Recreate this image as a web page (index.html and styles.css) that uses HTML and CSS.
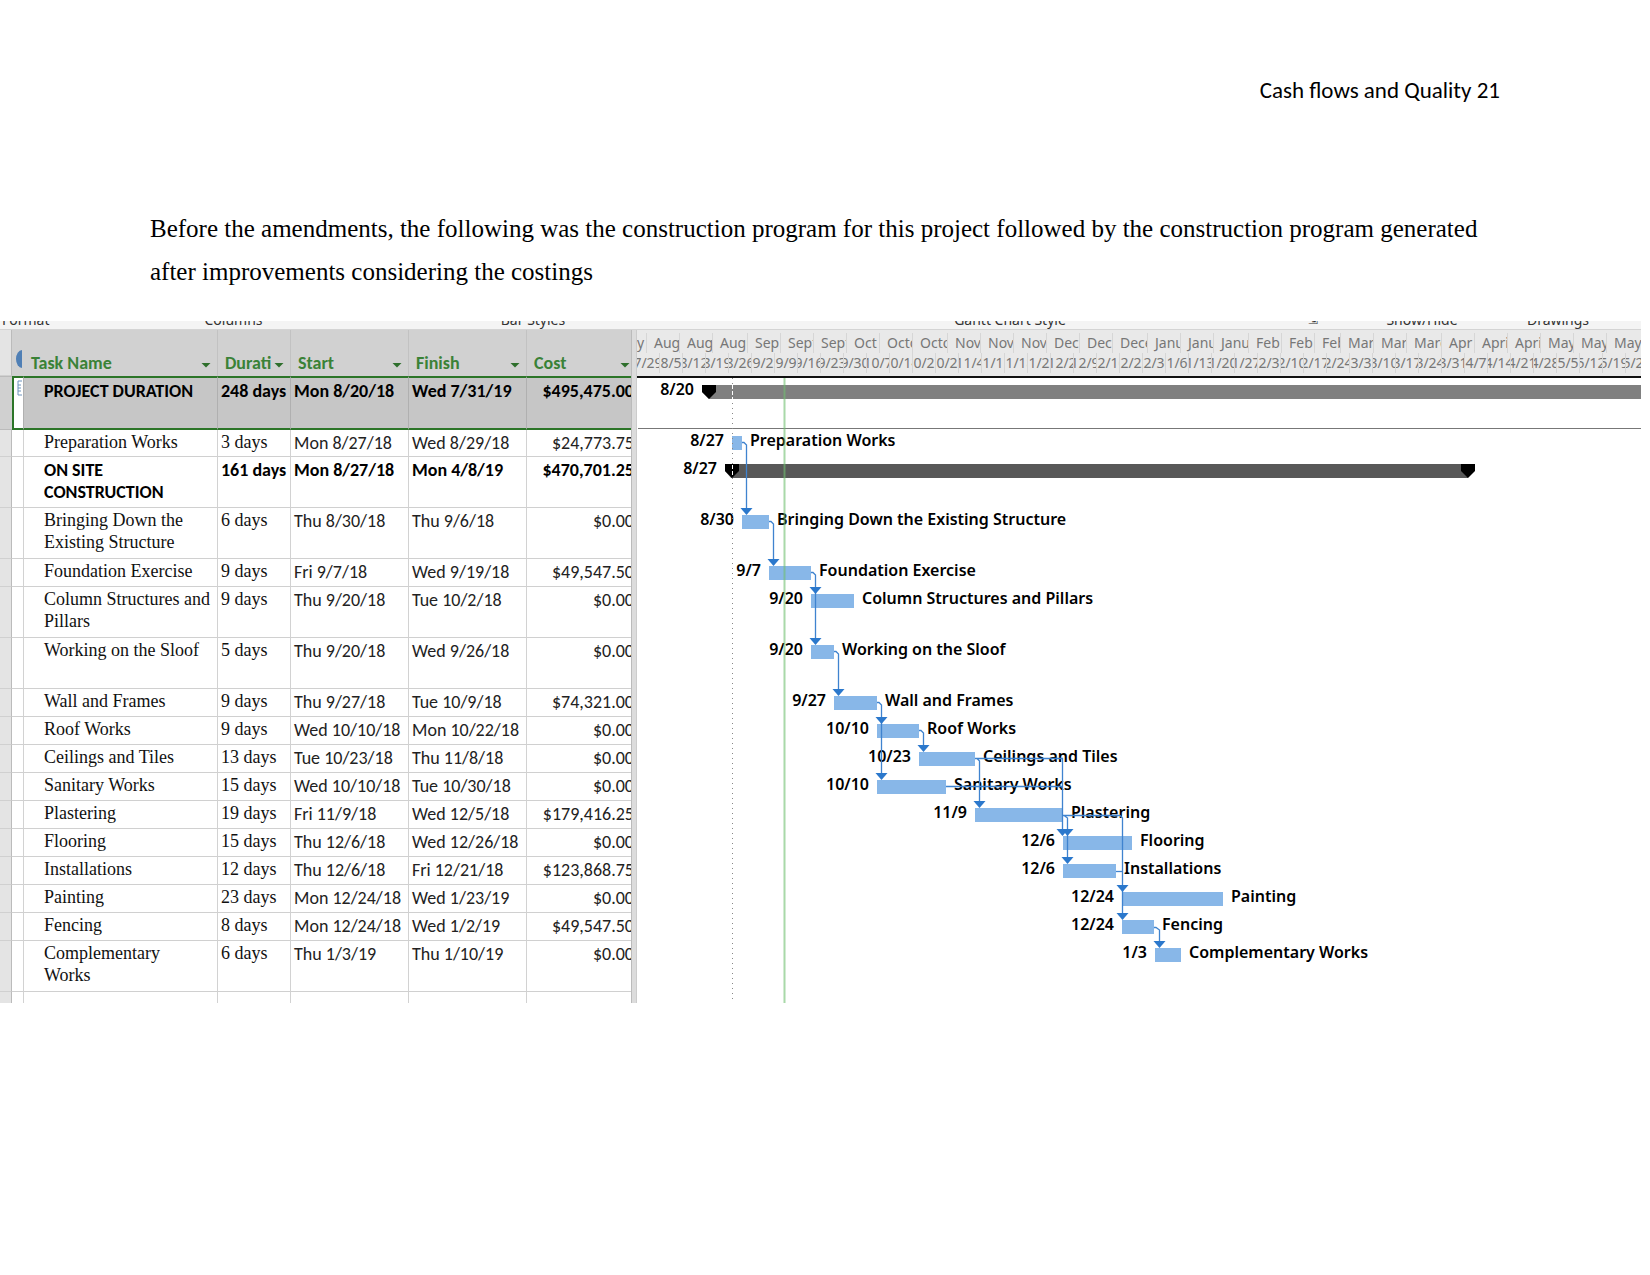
FILE: index.html
```html
<!DOCTYPE html>
<html lang="en">
<head>
<meta charset="utf-8">
<title>Cash flows and Quality</title>
<link rel="stylesheet" href="styles.css">
</head>
<body>
<header class="page-header">Cash flows and Quality 21</header>
<main>
<p class="intro">Before the amendments, the following was the construction program for this project followed by the construction program generated after improvements considering the costings</p>
<section class="program">
<div class="ribbon"><span class="first">Format</span><span>Columns</span><span>Bar Styles</span><span>Gantt Chart Style</span><span class="launcher">⇲</span><span>Show/Hide</span><span>Drawings</span></div>
<div class="panes">
<div class="sheet">
<table>
<colgroup><col class="c-head"><col class="c-info"><col class="c-task"><col class="c-dur"><col class="c-date"><col class="c-date"><col class="c-cost"></colgroup>
<thead>
<tr><td class="rowhead"></td><th class="info"><svg width="6" height="18" viewBox="0 0 6 18" aria-hidden="true"><path d="M6 0A6 9 0 0 0 6 18Z" fill="#4f7fb5"/></svg></th><th><div class="th"><span>Task Name</span><button aria-label="Filter task name"></button></div></th><th><div class="th"><span>Durati</span><button aria-label="Filter duration"></button></div></th><th><div class="th"><span>Start</span><button aria-label="Filter start"></button></div></th><th><div class="th"><span>Finish</span><button aria-label="Filter finish"></button></div></th><th><div class="th"><span>Cost</span><button aria-label="Filter cost"></button></div></th></tr>
</thead>
<tbody>
<tr class="selected bold"><td class="rowhead"></td><td class="info"><svg width="5" height="16" viewBox="0 0 5 16" aria-hidden="true"><path d="M5 1H1V15H5M1 5H4M1 8H4M1 11H4" fill="none" stroke="#6d93bd"/></svg></td><td>PROJECT DURATION</td><td>248 days</td><td>Mon 8/20/18</td><td>Wed 7/31/19</td><td>$495,475.00</td></tr>
<tr class="after"><td class="rowhead"></td><td></td><td>Preparation Works</td><td>3 days</td><td>Mon 8/27/18</td><td>Wed 8/29/18</td><td>$24,773.75</td></tr>
<tr class="tall bold"><td class="rowhead"></td><td></td><td>ON SITE CONSTRUCTION</td><td>161 days</td><td>Mon 8/27/18</td><td>Mon 4/8/19</td><td>$470,701.25</td></tr>
<tr class="tall"><td class="rowhead"></td><td></td><td>Bringing Down the Existing Structure</td><td>6 days</td><td>Thu 8/30/18</td><td>Thu 9/6/18</td><td>$0.00</td></tr>
<tr><td class="rowhead"></td><td></td><td>Foundation Exercise</td><td>9 days</td><td>Fri 9/7/18</td><td>Wed 9/19/18</td><td>$49,547.50</td></tr>
<tr class="tall"><td class="rowhead"></td><td></td><td>Column Structures and Pillars</td><td>9 days</td><td>Thu 9/20/18</td><td>Tue 10/2/18</td><td>$0.00</td></tr>
<tr class="tall"><td class="rowhead"></td><td></td><td>Working on the Sloof</td><td>5 days</td><td>Thu 9/20/18</td><td>Wed 9/26/18</td><td>$0.00</td></tr>
<tr><td class="rowhead"></td><td></td><td>Wall and Frames</td><td>9 days</td><td>Thu 9/27/18</td><td>Tue 10/9/18</td><td>$74,321.00</td></tr>
<tr><td class="rowhead"></td><td></td><td>Roof Works</td><td>9 days</td><td>Wed 10/10/18</td><td>Mon 10/22/18</td><td>$0.00</td></tr>
<tr><td class="rowhead"></td><td></td><td>Ceilings and Tiles</td><td>13 days</td><td>Tue 10/23/18</td><td>Thu 11/8/18</td><td>$0.00</td></tr>
<tr><td class="rowhead"></td><td></td><td>Sanitary Works</td><td>15 days</td><td>Wed 10/10/18</td><td>Tue 10/30/18</td><td>$0.00</td></tr>
<tr><td class="rowhead"></td><td></td><td>Plastering</td><td>19 days</td><td>Fri 11/9/18</td><td>Wed 12/5/18</td><td>$179,416.25</td></tr>
<tr><td class="rowhead"></td><td></td><td>Flooring</td><td>15 days</td><td>Thu 12/6/18</td><td>Wed 12/26/18</td><td>$0.00</td></tr>
<tr><td class="rowhead"></td><td></td><td>Installations</td><td>12 days</td><td>Thu 12/6/18</td><td>Fri 12/21/18</td><td>$123,868.75</td></tr>
<tr><td class="rowhead"></td><td></td><td>Painting</td><td>23 days</td><td>Mon 12/24/18</td><td>Wed 1/23/19</td><td>$0.00</td></tr>
<tr><td class="rowhead"></td><td></td><td>Fencing</td><td>8 days</td><td>Mon 12/24/18</td><td>Wed 1/2/19</td><td>$49,547.50</td></tr>
<tr class="tall"><td class="rowhead"></td><td></td><td>Complementary<br>Works</td><td>6 days</td><td>Thu 1/3/19</td><td>Thu 1/10/19</td><td>$0.00</td></tr>
<tr class="stub"><td class="rowhead"></td><td></td><td></td><td></td><td></td><td></td><td></td></tr>
</tbody>
</table>
</div>
<div class="splitter"></div>
<div class="chart">
<div class="scale">
<div class="tier months"><span class="part">y</span><span>Aug</span><span>Aug</span><span class="long">Augu</span><span>Sep</span><span>Sept</span><span>Sept</span><span>Oct</span><span>Octo</span><span class="long">Octo</span><span>Nov</span><span>Nov</span><span>Nov</span><span>Dec</span><span>Dec</span><span class="long">Dece</span><span>Janu</span><span>Janu</span><span class="long">Janu</span><span>Feb</span><span>Feb</span><span class="short">Feb</span><span>Mar</span><span>Mar</span><span class="long">Marc</span><span>Apr</span><span>Apri</span><span>Apri</span><span>May</span><span>May</span><span class="long">May</span></div>
<div class="tier weeks"><span>7/29</span><span>8/5</span><span>8/12</span><span>8/19</span><span>8/26</span><span>9/2</span><span>9/9</span><span>9/16</span><span>9/23</span><span>9/30</span><span>10/7</span><span>10/14</span><span>10/21</span><span>10/28</span><span>11/4</span><span>11/11</span><span>11/18</span><span>11/25</span><span>12/2</span><span>12/9</span><span>12/16</span><span>12/23</span><span>12/30</span><span>1/6</span><span>1/13</span><span>1/20</span><span>1/27</span><span>2/3</span><span>2/10</span><span>2/17</span><span>2/24</span><span>3/3</span><span>3/10</span><span>3/17</span><span>3/24</span><span>3/31</span><span>4/7</span><span>4/14</span><span>4/21</span><span>4/28</span><span>5/5</span><span>5/12</span><span>5/19</span><span>5/26</span></div>
</div>
<div class="bars">
<div class="row tall ruled"><span class="date" style="width:64px">8/20</span><i class="bar project"></i></div>
<div class="row"><span class="date" style="width:94px">8/27</span><i class="bar" style="width:10px"></i><span>Preparation Works</span></div>
<div class="row tall"><span class="date" style="width:87px">8/27</span><i class="bar summary" style="width:743px"></i></div>
<div class="row tall"><span class="date" style="width:104px">8/30</span><i class="bar" style="width:27px"></i><span>Bringing Down the Existing Structure</span></div>
<div class="row"><span class="date" style="width:131px">9/7</span><i class="bar" style="width:42px"></i><span>Foundation Exercise</span></div>
<div class="row tall"><span class="date" style="width:173px">9/20</span><i class="bar" style="width:43px"></i><span>Column Structures and Pillars</span></div>
<div class="row tall"><span class="date" style="width:173px">9/20</span><i class="bar" style="width:23px"></i><span>Working on the Sloof</span></div>
<div class="row"><span class="date" style="width:196px">9/27</span><i class="bar" style="width:43px"></i><span>Wall and Frames</span></div>
<div class="row"><span class="date" style="width:239px">10/10</span><i class="bar" style="width:42px"></i><span>Roof Works</span></div>
<div class="row"><span class="date" style="width:281px">10/23</span><i class="bar" style="width:56px"></i><span>Ceilings and Tiles</span></div>
<div class="row"><span class="date" style="width:239px">10/10</span><i class="bar" style="width:69px"></i><span>Sanitary Works</span></div>
<div class="row"><span class="date" style="width:337px">11/9</span><i class="bar" style="width:88px"></i><span>Plastering</span></div>
<div class="row"><span class="date" style="width:425px">12/6</span><i class="bar" style="width:69px"></i><span>Flooring</span></div>
<div class="row"><span class="date" style="width:425px">12/6</span><i class="bar" style="width:53px"></i><span>Installations</span></div>
<div class="row"><span class="date" style="width:484px">12/24</span><i class="bar" style="width:101px"></i><span>Painting</span></div>
<div class="row"><span class="date" style="width:484px">12/24</span><i class="bar" style="width:32px"></i><span>Fencing</span></div>
<div class="row tall"><span class="date" style="width:517px">1/3</span><i class="bar" style="width:26px"></i><span>Complementary Works</span></div>
<svg class="links" width="1003" height="625" viewBox="638 377 1003 625" aria-hidden="true">
<defs><path id="tip" d="M-6 -7H6L0 0Z" fill="#2b78cc"/><path id="cap" d="M-7 0H7V7L0 14L-7 7Z"/></defs>
<path d="M732.5 377V1002" stroke="#888" stroke-dasharray="1 4"/>
<path d="M732.5 384V398" stroke="#fff" stroke-dasharray="4 2"/>
<path d="M702 391V398H709Z" fill="#fff"/><path d="M725 470V478H732Z" fill="#fff"/><path d="M1475 470V478H1468Z" fill="#fff"/>
<use href="#cap" x="709" y="384"/><use href="#cap" x="732" y="463"/><use href="#cap" x="1468" y="463"/>
<path d="M732.5 464V476" stroke="#fff" stroke-dasharray="4 2"/>
<path d="M784.5 377V1002" stroke="#6fbf6f" stroke-opacity=".6" stroke-width="2"/>
<g fill="none" stroke="#3f83cf" stroke-width="1.3">
<path d="M742 441.5H744L746.5 444V508"/>
<path d="M769 520.5H771L773.5 523V559"/>
<path d="M811 571.5H813L815.5 574V638"/>
<path d="M834 650.5H836L838.5 653V689"/>
<path d="M877 701.5H879L881.5 704V773"/>
<path d="M919 729.5H921L923.5 732V745"/>
<path d="M975 757.5H1062.5V829M975 757.5H977L979.5 760V801"/>
<path d="M946 785.5H1062.5"/>
<path d="M1062 814.5H1120L1122.5 817V913M1064 814.5L1067.5 817V857"/>
<path d="M1116 870.5H1122"/>
<path d="M1154 926.5H1156L1159.5 929V941"/>
</g>
<use href="#tip" x="746.5" y="514"/><use href="#tip" x="773.5" y="565"/><use href="#tip" x="815.5" y="593"/><use href="#tip" x="815.5" y="644"/><use href="#tip" x="838.5" y="695"/><use href="#tip" x="881.5" y="723"/><use href="#tip" x="881.5" y="779"/><use href="#tip" x="923.5" y="751"/><use href="#tip" x="979.5" y="807"/><use href="#tip" x="1062.5" y="835"/><use href="#tip" x="1067.5" y="835"/><use href="#tip" x="1067.5" y="863"/><use href="#tip" x="1122.5" y="891"/><use href="#tip" x="1122.5" y="919"/><use href="#tip" x="1159.5" y="947"/>
</svg>
</div>
</div>
</div>
</section>
</main>
</body>
</html>
```
FILE: styles.css
```css
* { box-sizing: border-box; }
body { margin: 0; background: #fff; color: #000; font-family: Carlito, Calibri, Lato, sans-serif; }

.page-header { padding: 76px 150px 0; text-align: right; font-size: 23px; line-height: 28px; }
.intro { margin: 103px 150px 28px; font: 25px/43px "Liberation Serif", serif; }

.program { margin-right: 9px; overflow: hidden; }
.ribbon { display: grid; grid-template-columns: 117px 233px 366px 588px 18px 200px 72px; align-content: end; height: 9px; overflow: hidden; background: #f4f4f4; border-bottom: 1px solid #d4d4d4; font: 14px/18px "Noto Sans", sans-serif; color: #333; text-align: center; }
.ribbon .first { text-align: left; padding-left: 2px; }
.ribbon .launcher { font-size: 12px; }
.panes { display: grid; grid-template-columns: 631px 6px minmax(0, 1fr); }
.splitter { background: #dcdcdc; border-left: 1px solid #bbb; border-right: 1px solid #ccc; }

.sheet { overflow: hidden; }
table { width: 638px; table-layout: fixed; border-collapse: separate; border-spacing: 0; font-size: 18px; line-height: 22px; color: #222; }
.c-head { width: 12px; }
.c-info { width: 12px; }
.c-task { width: 194px; }
.c-dur { width: 73px; }
.c-date { width: 118px; }
.c-cost { width: 111px; }
th { height: 46px; padding: 0 4px 2px 7px; vertical-align: bottom; background: #d1d1d1; border-right: 1px solid #c2c2c2; color: #3a8237; text-align: left; }
th.info { padding: 0 0 8px 4px; border-right: 0; line-height: 0; }
.th { display: flex; justify-content: space-between; align-items: center; }
.th button { width: 10px; height: 5px; padding: 0; border: 0; margin: 4px 2px 0 0; background: #2e6f2c; clip-path: polygon(0 0, 100% 0, 50% 100%); }
th:last-child { padding-right: 5px; }
tbody tr { height: 28px; }
tbody tr.tall { height: 51px; }
tbody tr.after { height: 27px; }
tbody tr.stub { height: 11px; }
td { padding: 2px 0 0 3px; vertical-align: top; border-right: 1px solid #d2d2d2; border-bottom: 1px solid #d0d0d0; white-space: nowrap; }
td:nth-child(3) { padding-left: 20px; white-space: normal; }
td:nth-child(3), td:nth-child(4) { padding-top: 1px; font-family: "Liberation Serif", serif; font-size: 18px; color: #111; }
td:last-child { padding-right: 3px; text-align: right; }
td.rowhead { padding: 0; background: #e4e4e4; border-right-color: #bbb; }
.stub td { padding: 0; border-bottom: 0; }
tr.bold td { padding-top: 2px; font-family: Carlito, Calibri, Lato, sans-serif; font-weight: 700; color: #000; }
tr.selected { height: 54px; }
tr.selected td { background: #c6c6c6; border-top: 2px solid #2c7528; border-bottom: 2px solid #2c7528; border-right-color: #b0b0b0; }
tr.selected td.info { background: #fff; border-left: 2px solid #2c7528; line-height: 0; }
tr.selected td.rowhead { background: #d0d0d0; border-top: 1px solid #bbb; border-bottom: 1px solid #bbb; border-right: 0; }

.chart { overflow: hidden; }
.scale { height: 48px; padding-top: 3px; background: #e9e9e9; border-bottom: 2px solid #111; overflow: hidden; font: 14px/20px "Noto Sans", sans-serif; color: #777; }
.tier { display: flex; }
.tier span { flex: none; overflow: hidden; white-space: nowrap; border-right: 1px solid #d6d6d6; }
.months span { width: 33px; padding-left: 7px; }
.months .part { width: 10px; padding: 0; }
.months .long { width: 35px; }
.months .short { width: 26px; }
.weeks span { display: flex; justify-content: center; width: 23px; }
.bars { position: relative; height: 625px; padding-left: 1px; font: 600 16px/22px "Noto Sans", sans-serif; }
.row { display: flex; gap: 8px; height: 28px; white-space: nowrap; }
.row.tall { height: 51px; }
.row .date { flex: none; padding-right: 8px; margin-right: -8px; text-align: right; }
.row.ruled { border-bottom: 1px solid #777; }
.bar { flex: none; height: 14px; margin-top: 7px; background: #88b7e8; }
.bar.project { flex: 1; background: #808080; }
.bar.summary { background: #585858; }
.links { position: absolute; left: 1px; top: 0; }
```
